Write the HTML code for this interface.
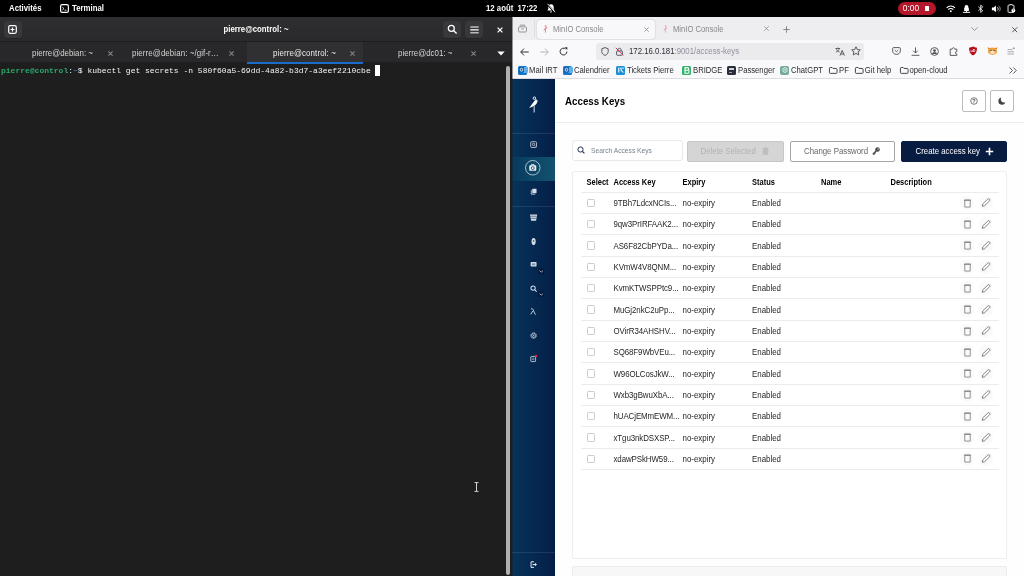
<!DOCTYPE html>
<html><head><meta charset="utf-8"><title>MinIO Console</title>
<style>
*{box-sizing:border-box;margin:0;padding:0}
#top,#term,#br{will-change:transform}
html,body{width:1024px;height:576px;overflow:hidden;background:#000;font-family:"Liberation Sans","DejaVu Sans",sans-serif}
svg{position:absolute;overflow:visible}
#top{position:absolute;left:0;top:0;width:1024px;height:17px;background:#000;color:#fff;font-family:"Liberation Sans","DejaVu Sans",sans-serif;font-weight:bold;font-size:7.8px;line-height:17.5px}
#top span{position:absolute;top:0;white-space:nowrap;transform:scaleY(1.1);transform-origin:50% 58%}
#rec{position:absolute;left:898px;top:2px;width:38px;height:13px;border-radius:7px;background:#b4162a}
/* terminal */
#term{position:absolute;left:0;top:17px;width:512px;height:559px;background:#1e1e1e;overflow:hidden}
#thead{position:absolute;left:0;top:0;width:512px;height:25.3px;background:linear-gradient(#2e2d2f,#2a292b);border-bottom:1.5px solid #1d1c1e}
.hb{position:absolute;top:4px;height:17px;width:17.5px;background:#383739;border-radius:3px;box-shadow:0 .8px 0 #222123}
#ttitle{position:absolute;left:0;width:512px;top:0;text-align:center;color:#fff;font-family:"Liberation Sans","DejaVu Sans",sans-serif;font-weight:bold;font-size:7.8px;line-height:25px;transform:scaleY(1.1);transform-origin:50% 56%}
#ttabs{position:absolute;left:0;top:25px;width:512px;height:21px;background:#282729;border-bottom:1px solid #1f1e20}
#tact{position:absolute;left:247px;top:0;width:116px;height:21.8px;background:#302f31;border-bottom:2px solid #1c6ccc}
.tt{position:absolute;top:0;height:21px;color:#d4d4d4;font-family:"Liberation Sans","DejaVu Sans",sans-serif;font-size:7.9px;line-height:23px;white-space:nowrap;transform:scaleY(1.1);transform-origin:50% 56%}
#tline{position:absolute;left:1px;top:46.8px;white-space:pre;font-family:"Liberation Mono","DejaVu Sans Mono",monospace;font-size:8px;line-height:14px;color:#f4f4f4}
#tcur{position:absolute;left:375px;top:47.5px;width:5px;height:11px;background:#fff}
#tscroll{position:absolute;left:506.3px;top:48.5px;width:4px;height:509px;border-radius:2px;background:#b0b0b0}
/* browser */
#br{position:absolute;left:512px;top:17px;width:512px;height:559px;background:#f9f9fb;overflow:hidden}
#bedge{position:absolute;left:0;top:0;width:1px;height:559px;background:rgba(28,28,30,.45);z-index:9}
#btabs{position:absolute;left:0;top:0;width:512px;height:23px;background:#eeeef1}
#btab1{position:absolute;left:25px;top:2.5px;width:118px;height:19px;background:#f8f8fa;border-radius:3px;box-shadow:0 0 1.5px rgba(0,0,0,.28)}
.bt{position:absolute;top:0;font-size:7.65px;color:#88888c;line-height:25px;white-space:nowrap;transform:scaleY(1.12);transform-origin:50% 56%}
#btool{position:absolute;left:0;top:23px;width:512px;height:22px;background:#f9f9fb}
#url{position:absolute;left:83.5px;top:2.8px;width:268.5px;height:17px;border-radius:3px;background:#ebebee;font-size:7.8px;line-height:18.4px;color:#8f8f9d;white-space:nowrap}
#bbm{position:absolute;left:0;top:45px;width:512px;height:17px;background:#f9f9fb;border-bottom:1px solid #dcdce0;font-size:7.7px;color:#2c2c31;line-height:16.5px}
#bbm span{position:absolute;top:.7px;white-space:nowrap;transform:scaleY(1.12);transform-origin:50% 56%}
.ic{position:absolute;top:3.5px;width:9px;height:9px;border-radius:1.5px}
/* page */
#page{position:absolute;left:0;top:62px;width:512px;height:497px;background:#fefefe;overflow:hidden}
#pin{position:absolute;left:1px;top:0;width:511px;height:497px}
#side{position:absolute;left:-1px;top:0;width:43px;height:497px;background:linear-gradient(90deg,#07345a 0%,#062b52 35%,#05234c 80%,#041d47 100%)}
.sep{position:absolute;left:0;width:43px;height:1px;background:rgba(255,255,255,.10)}
#sel{position:absolute;left:0;top:77.5px;width:43px;height:24px;background:linear-gradient(90deg,#083a5e 0%,#0d4868 55%,#12526f 100%)}
#phead{position:absolute;left:42px;top:0;width:469px;height:43.6px;background:#fff;border-bottom:1px solid #eeeeee}
#phead h1{transform:scaleY(1.08);transform-origin:50% 56%;position:absolute;left:10px;top:15.6px;font-size:9.75px;font-weight:bold;color:#000;line-height:14px}
.sq{position:absolute;top:11.3px;width:24px;height:21.7px;border:1px solid #bdbdbd;border-radius:2px;background:#fff}
.btn{position:absolute;top:61.5px;height:21px;border-radius:2px;font-size:7.85px;line-height:21px;white-space:nowrap}
.btn span{position:absolute;top:0;transform:scaleY(1.12);transform-origin:50% 56%}
#tbl{position:absolute;left:59px;top:92px;width:435px;height:387.5px;padding-top:0;background:#fff;border:1px solid #eeeeee;border-radius:2px}
#nxt{position:absolute;left:59px;top:487px;width:435px;height:30px;background:#f7f7f7;border:1px solid #ececec;border-radius:2px}
.row{position:absolute;left:7.5px;width:418px;height:21.33px;border-bottom:1px solid #ebebeb;font-size:7.9px;color:#262626;line-height:21px}
.row span{position:absolute;top:.2px;white-space:nowrap;transform:scaleY(1.13);transform-origin:50% 55%}
.hd{font-weight:bold;color:#000;font-size:7.5px}
.cb{position:absolute;left:6px;top:6px;width:8.6px;height:8.4px;border:1px solid #cdcdcd;border-radius:1.2px;background:#fff}
.ci{position:absolute;top:3.2px;width:14px;height:14px;border-radius:7px;background:#fafafa}
</style></head><body>
<div id="top">
<span style="left:9px">Activités</span>
<svg style="left:60px;top:3.5px" width="9" height="9" viewBox="0 0 9 9" ><rect x=".6" y=".6" width="7.8" height="7.8" rx="1.6" fill="none" stroke="#fff" stroke-width="1.2"/><path d="M2.4 3.2 L4 4.6 L2.4 6" fill="none" stroke="#fff" stroke-width=".9"/><path d="M4.6 6.2H6.4" stroke="#fff" stroke-width=".9"/></svg>
<span style="left:72px">Terminal</span>
<span style="left:486px">12 août</span><span style="left:517.5px">17:22</span>
<svg style="left:546px;top:3px" width="10" height="11" viewBox="0 0 10 11" ><path d="M5 1.2c-1.7 0-2.7 1.2-2.7 2.9v2l-1 1.5h7.4l-1-1.5v-2c0-1.7-1-2.9-2.7-2.9z" fill="#fff"/><path d="M4 8.4h2c0 .7-.4 1.1-1 1.1s-1-.4-1-1.1z" fill="#fff"/><path d="M1.2 1 L8.8 9.6" stroke="#000" stroke-width="1.6"/><path d="M1.6 .8 L9 9.2" stroke="#fff" stroke-width=".9"/></svg>
<div id="rec"></div>
<span style="left:902.800px;font-size:8.400px;font-weight:normal">0:00</span>
<div style="position:absolute;left:925px;top:6.2px;width:4.4px;height:4.4px;background:#fff;border-radius:.5px"></div>
<svg style="left:946.3px;top:4.6px" width="9.6" height="8" viewBox="0 0 12 10" ><path d="M.8 3.6C2.1 2.2 3.9 1.3 6 1.3s3.9.9 5.2 2.3" fill="none" stroke="#fff" stroke-width="1.3"/><path d="M2.8 5.7C3.6 4.8 4.7 4.3 6 4.3s2.4.5 3.2 1.4" fill="none" stroke="#fff" stroke-width="1.3"/><circle cx="6" cy="7.9" r="1.2" fill="#fff"/></svg>
<svg style="left:961.7px;top:3.8px" width="9" height="9.9" viewBox="0 0 10 11" ><path d="M3 4.2V3c0-1.1.9-1.9 2-1.9S7 1.900 7 3v1.200h.6v3.600H2.400V4.200z" fill="#fff"/><path d="M1 9.300h8" stroke="#fff" stroke-width="1.100"/><path d="M5 7.800v1.500" stroke="#fff" stroke-width="1"/></svg>
<svg style="left:977.3px;top:3.5px" width="7.4" height="9.8" viewBox="0 0 9 12" ><path d="M1.600 3.500L7 8.200 4.500 10.400V1.400L7 3.600 1.600 8.300" fill="none" stroke="#fff" stroke-width="1"/></svg>
<svg style="left:990.5px;top:3.6px" width="11.5" height="9.7" viewBox="0 0 13 11" ><path d="M1 4h2L5.600 1.600v7.800L3 7H1z" fill="#fff"/><path d="M7 3.600c.8.500 1.100 1.100 1.100 1.900S7.800 6.900 7 7.400" fill="none" stroke="#fff" stroke-width="1"/><path d="M8.600 2.200c1.200.8 1.800 1.900 1.800 3.300s-.6 2.500-1.800 3.300" fill="none" stroke="#bbb" stroke-width=".9"/></svg>
<svg style="left:1006.6px;top:3.8px" width="8.8" height="9.6" viewBox="0 0 11 12" ><path d="M3.500 1.500V.8h3v.7H8c.4 0 .7.300.7.700v7.600c0 .4-.3.700-.7.700H2c-.4 0-.7-.3-.7-.7V2.200c0-.4.300-.7.700-.7z" fill="none" stroke="#fff" stroke-width="1.100"/><circle cx="8" cy="8" r="2.400" fill="#fff"/><path d="M7 7.300c.3-.8 1.700-.7 1.600.2 0 .5-.7.600-.7 1.100" fill="none" stroke="#000" stroke-width=".6"/></svg>
</div>
<div id="term">
 <div id="thead">
  <div class="hb" style="left:4px"></div>
  <svg style="left:8.2px;top:7.8px" width="9" height="9" viewBox="0 0 9 9" ><rect x=".7" y=".7" width="7.600" height="7.600" rx="1.500" fill="none" stroke="#fff" stroke-width="1.200"/><path d="M4.500 2.500v4M2.500 4.500h4" stroke="#fff" stroke-width="1.200"/></svg>
  <div id="ttitle">pierre@control: ~</div>
  <div class="hb" style="left:443px"></div>
  <svg style="left:446.5px;top:7px" width="11" height="11" viewBox="0 0 11 11" ><circle cx="4.300" cy="4.300" r="3" fill="none" stroke="#fff" stroke-width="1.300"/><path d="M6.500 6.500L9.600 9.600" stroke="#fff" stroke-width="1.400"/></svg>
  <div class="hb" style="left:465px"></div>
  <svg style="left:469.5px;top:8.5px" width="9" height="8" viewBox="0 0 9 8" ><path d="M.3 1h8.400M.3 3.900h8.400" stroke="#fff" stroke-width="1.200"/><path d="M.3 6.800h8.400" stroke="#ddd" stroke-width="1.200"/></svg>
  <svg style="left:497px;top:9.5px" width="6" height="6" viewBox="0 0 6 6" ><path d="M.6 .6L5.400 5.400M5.400 .6L.6 5.400" stroke="#fff" stroke-width="1.300"/></svg>
 </div>
 <div id="ttabs">
  <div id="tact"></div>
  <span class="tt" style="left:32px;letter-spacing:0px;color:#d4d4d4">pierre@debian: ~</span><svg style="left:108.0px;top:8.8px" width="5" height="5" viewBox="0 0 5 5" ><path d="M.4 .4L4.600 4.600M4.600 .4L.4 4.600" stroke="#858585" stroke-width="1.050"/></svg>
  <span class="tt" style="left:132px;letter-spacing:0.1px;color:#d4d4d4">pierre@debian: ~/gif-r…</span><svg style="left:228.5px;top:8.8px" width="5" height="5" viewBox="0 0 5 5" ><path d="M.4 .4L4.600 4.600M4.600 .4L.4 4.600" stroke="#858585" stroke-width="1.050"/></svg>
  <span class="tt" style="left:273px;letter-spacing:0.12px;color:#ececec">pierre@control: ~</span><svg style="left:349.5px;top:8.8px" width="5" height="5" viewBox="0 0 5 5" ><path d="M.4 .4L4.600 4.600M4.600 .4L.4 4.600" stroke="#858585" stroke-width="1.050"/></svg>
  <span class="tt" style="left:398px;letter-spacing:0px;color:#d4d4d4">pierre@dc01: ~</span><svg style="left:470.5px;top:8.8px" width="5" height="5" viewBox="0 0 5 5" ><path d="M.4 .4L4.600 4.600M4.600 .4L.4 4.600" stroke="#858585" stroke-width="1.050"/></svg>
  <svg style="left:496.5px;top:9px" width="8" height="5" viewBox="0 0 8 5" ><path d="M.3 .5h7.400L4 4.500z" fill="#fff"/></svg>
 </div>
 <div id="tline"><b style="color:#2aa86a">pierre@control</b>:<b style="color:#2a6db5">~</b>$ kubectl get secrets -n 580f60a5-69dd-4a82-b3d7-a3eef2210cbe</div>
 <div id="tcur"></div>
 <div id="tscroll"></div>
 <svg style="left:474px;top:465px" width="5" height="10" viewBox="0 0 5 10" ><path d="M.5 .6h4M.5 9.400h4M2.500 .6v8.800" stroke="#d0d0d0" stroke-width="1"/></svg>
</div>
<div id="br"><div id="bedge"></div>
 <div id="btabs">
  <svg style="left:6.3px;top:7.3px" width="9" height="9" viewBox="0 0 10 9" ><rect x=".6" y="2.600" width="8.800" height="5.800" rx="1.200" fill="none" stroke="#8a8a92" stroke-width="1"/><path d="M2 .8h6" stroke="#8a8a92" stroke-width="1"/><path d="M3.600 5h2.800" stroke="#8a8a92" stroke-width="1"/></svg>
  <div style="position:absolute;left:22px;top:3px;width:1px;height:17px;background:#dcdce2"></div>
  <div id="btab1"></div>
  <svg style="left:30.9px;top:7.7px" width="4.3" height="8.1" viewBox="0 0 9 17" ><circle cx="5.300" cy="2.300" r="1.300" fill="none" stroke="#e0566a" stroke-width="1.100"/><path d="M6.300 2.900C7.600 3.800 8 4.800 7.600 6" fill="none" stroke="#e0566a" stroke-width="1.100"/><path d="M7.900 5.200C7.800 8 5 9.800 .5 11.500 2.600 9 4.600 6.800 6.600 4.900z" fill="#e0566a"/><path d="M5.100 9.800V16.300" stroke="#e0566a" stroke-width="1.400"/></svg>
  <span class="bt" style="left:41px">MinIO Console</span>
  <svg style="left:131.5px;top:9.5px" width="5" height="5" viewBox="0 0 5 5" ><path d="M.3 .3L4.700 4.700M4.700 .3L.3 4.700" stroke="#8a8a92" stroke-width=".8"/></svg>
  <div style="opacity:.6"><svg style="left:151.4px;top:7.7px" width="4.3" height="8.1" viewBox="0 0 9 17" ><circle cx="5.300" cy="2.300" r="1.300" fill="none" stroke="#e0566a" stroke-width="1.100"/><path d="M6.300 2.900C7.600 3.800 8 4.800 7.600 6" fill="none" stroke="#e0566a" stroke-width="1.100"/><path d="M7.900 5.200C7.800 8 5 9.800 .5 11.500 2.600 9 4.600 6.800 6.600 4.900z" fill="#e0566a"/><path d="M5.100 9.800V16.300" stroke="#e0566a" stroke-width="1.400"/></svg></div>
  <span class="bt" style="left:161px">MinIO Console</span>
  <svg style="left:251.8px;top:9.2px" width="5" height="5" viewBox="0 0 5 5" ><path d="M.3 .3L4.700 4.700M4.700 .3L.3 4.700" stroke="#8a8a92" stroke-width=".8"/></svg>
  <svg style="left:270.5px;top:8.5px" width="7" height="7" viewBox="0 0 7 7" ><path d="M3.500 .3v6.400M.3 3.500h6.400" stroke="#7a7a82" stroke-width=".9"/></svg>
  <svg style="left:458.5px;top:10px" width="7" height="4" viewBox="0 0 7 4" ><path d="M.4 .4L3.500 3.400 6.600 .4" fill="none" stroke="#8a8a92" stroke-width=".9"/></svg>
  <svg style="left:500px;top:9.5px" width="5.5" height="5.5" viewBox="0 0 5 5" ><path d="M.3 .3L4.700 4.700M4.700 .3L.3 4.700" stroke="#55555c" stroke-width=".9"/></svg>
 </div>
 <div id="btool">
  <svg style="left:8px;top:7.5px" width="9" height="8" viewBox="0 0 9 8" ><path d="M4 .6L.7 4 4 7.400M.9 4h7.800" fill="none" stroke="#2b2b33" stroke-width="1"/></svg>
  <svg style="left:27.5px;top:7.5px" width="9" height="8" viewBox="0 0 9 8" ><path d="M5 .6L8.300 4 5 7.400M8.100 4H.3" fill="none" stroke="#b4b4bb" stroke-width="1"/></svg>
  <svg style="left:46.5px;top:6.5px" width="9" height="9" viewBox="0 0 9 9" ><path d="M7.900 4.600A3.400 3.400 0 1 1 6.600 1.900" fill="none" stroke="#2b2b33" stroke-width="1"/><path d="M5.600 .2h2.700v2.700z" fill="#2b2b33"/></svg>
  <div id="url">
   <svg style="left:5px;top:4px" width="8" height="9" viewBox="0 0 8 9" ><path d="M4 .6L.8 1.800v2.600c0 2 1.300 3.300 3.200 4 1.900-.7 3.200-2 3.200-4V1.800z" fill="none" stroke="#4a4a52" stroke-width=".9"/></svg>
   <svg style="left:19.5px;top:4px" width="9" height="9" viewBox="0 0 9 9" ><rect x="1.600" y="4" width="5.800" height="4.300" rx=".8" fill="none" stroke="#4a4a52" stroke-width=".9"/><path d="M2.900 4V2.900c0-1 .7-1.700 1.600-1.700s1.600.7 1.600 1.700V4" fill="none" stroke="#4a4a52" stroke-width=".9"/><path d="M.8 .8L8.200 8.400" stroke="#e22850" stroke-width=".9"/></svg>
   <span style="position:absolute;left:33.500px;top:0;transform:scaleY(1.12);transform-origin:50% 56%"><span style="color:#2e2e36">172.16.0.181</span>:9001/access-keys</span>
   <svg style="left:239.5px;top:4px" width="10" height="9" viewBox="0 0 10 9" ><path d="M.5 1.500h4.600M2.800 .5v1M1.300 1.500c.3 1.700 1.500 3 3.400 3.600M4.300 1.500C4 3.200 2.800 4.500 .9 5.100" fill="none" stroke="#4a4a52" stroke-width=".8"/><path d="M5 8.600L7.200 3.400 9.400 8.600M5.800 7h2.800" fill="none" stroke="#4a4a52" stroke-width=".9"/></svg>
   <svg style="left:255px;top:3.5px" width="10" height="10" viewBox="0 0 10 10" ><path d="M5 .8l1.300 2.800 3 .3-2.200 2 .6 3L5 7.400 2.300 8.900l.6-3-2.200-2 3-.3z" fill="none" stroke="#4a4a52" stroke-width=".9" stroke-linejoin="round"/></svg>
  </div>
  <svg style="left:379.5px;top:7px" width="9" height="8" viewBox="0 0 9 8" ><path d="M1.600 .6h5.800c.6 0 1 .4 1 1v2.200c0 2.100-1.700 3.600-3.900 3.600S.6 5.900.6 3.800V1.600c0-.6.400-1 1-1z" fill="none" stroke="#4a4a52" stroke-width=".9"/><path d="M2.700 3l1.800 1.700L6.300 3" fill="none" stroke="#4a4a52" stroke-width=".9"/></svg>
  <svg style="left:398.5px;top:6.5px" width="9" height="9" viewBox="0 0 9 9" ><path d="M4.500 .4v5.400M2.200 3.700l2.300 2.300 2.300-2.300M.6 8.300h7.800" fill="none" stroke="#4a4a52" stroke-width=".9"/></svg>
  <svg style="left:417.5px;top:6.5px" width="9" height="9" viewBox="0 0 9 9" ><circle cx="4.500" cy="4.500" r="3.900" fill="none" stroke="#4a4a52" stroke-width=".9"/><circle cx="4.500" cy="3.600" r="1.300" fill="#4a4a52"/><path d="M2 6.900c.5-1.200 1.400-1.600 2.500-1.600s2 .4 2.500 1.600" fill="#4a4a52"/></svg>
  <svg style="left:437px;top:6.5px" width="9" height="9" viewBox="0 0 9 9" ><path d="M3.200 2.200c0-1 .6-1.500 1.300-1.500s1.300.5 1.300 1.500h2v2.400M7.800 8.400H1.200V2.200h2" fill="none" stroke="#4a4a52" stroke-width=".9"/><path d="M7.800 4.600c-.9 0-1.400.5-1.400 1.200S6.900 7 7.800 7v1.400" fill="none" stroke="#4a4a52" stroke-width=".9"/></svg>
  <svg style="left:455.5px;top:6px" width="10" height="10" viewBox="0 0 10 10" ><path d="M5 .5c1.400.8 2.600 1.100 4 1.200 0 3.600-1 6.300-4 7.800C2 8 1 5.300 1 1.700 2.400 1.600 3.600 1.300 5 .5z" fill="#b5121b"/><text x="5" y="6.300" font-size="3.600" font-family="Liberation Sans,sans-serif" font-weight="bold" fill="#fff" text-anchor="middle">uD</text></svg>
  <svg style="left:475px;top:6px" width="11" height="10" viewBox="0 0 11 10" ><ellipse cx="5.500" cy="5.200" rx="4.600" ry="3.700" fill="#f0a23a"/><path d="M1.500 3.500L.5 1.200 3.400 2.200zM9.500 3.500l1-2.300-2.900 1z" fill="#e07a22"/><ellipse cx="5.500" cy="6.300" rx="2.400" ry="1.700" fill="#f7e3c0"/><circle cx="3.900" cy="4.400" r=".7" fill="#3b4a7a"/><circle cx="7.100" cy="4.400" r=".7" fill="#3b4a7a"/></svg>
  <svg style="left:494.5px;top:6px" width="10" height="10" viewBox="0 0 10 10" ><path d="M.5 3.600h5M.5 5.800h6.500M.5 8h6.500" stroke="#a2a2a8" stroke-width=".9"/><path d="M6.800 .8l1.400 2.200H5.400z" fill="#a2a2a8"/></svg>
 </div><div id="bbm">
  <div class="ic" style="left:6px;background:#1677c9"></div><div style="position:absolute;left:11px;top:5px;width:5px;height:6px;background:#5fb0ea;border-radius:1px"></div><svg style="left:6.8px;top:5.3px" width="5" height="5.5" viewBox="0 0 5 5.500" ><rect width="5" height="5.500" rx=".8" fill="#0f5ea8"/><ellipse cx="2.500" cy="2.750" rx="1.300" ry="1.500" fill="none" stroke="#fff" stroke-width=".8"/></svg><span style="left:17px">Mail IRT</span>
  <div class="ic" style="left:51px;background:#1677c9"></div><div style="position:absolute;left:56px;top:5px;width:5px;height:6px;background:#5fb0ea;border-radius:1px"></div><svg style="left:51.8px;top:5.3px" width="5" height="5.5" viewBox="0 0 5 5.500" ><rect width="5" height="5.500" rx=".8" fill="#0f5ea8"/><ellipse cx="2.500" cy="2.750" rx="1.300" ry="1.500" fill="none" stroke="#fff" stroke-width=".8"/></svg><span style="left:62px">Calendrier</span>
  <div class="ic" style="left:104px;background:#1d8fd6"></div><svg style="left:105.5px;top:5px" width="6" height="6" viewBox="0 0 6 6" ><path d="M.8 .5v5M3 .5v2.500l2.300 2.500M5 .5v1.500" fill="none" stroke="#fff" stroke-width="1.100"/></svg><span style="left:115px">Tickets Pierre</span>
  <div class="ic" style="left:170px;background:#2fb56a"></div><svg style="left:171.5px;top:4.5px" width="6" height="7" viewBox="0 0 6 7" ><path d="M1 .6h2.500c1.500 0 1.500 2.700 0 2.700H1h2.900c1.600 0 1.600 3 0 3H1z" fill="none" stroke="#fff" stroke-width="1.100"/></svg><span style="left:181px">BRIDGE</span>
  <div class="ic" style="left:215px;background:#2c2f3a"></div><div style="position:absolute;left:217px;top:5.500px;width:5px;height:2.500px;background:#cfd3dc"></div><div style="position:absolute;left:217px;top:9.500px;width:3px;height:1px;background:#9aa0ad"></div><span style="left:226px">Passenger</span>
  <div class="ic" style="left:268px;background:#74aa9c;border-radius:2px"></div><svg style="left:269.5px;top:5px" width="6" height="6" viewBox="0 0 6 6" ><circle cx="3" cy="3" r="2.300" fill="none" stroke="#fff" stroke-width=".8"/><circle cx="3" cy="3" r=".8" fill="#fff"/></svg><span style="left:279px">ChatGPT</span>
  <svg style="left:316.5px;top:4.5px" width="8.5" height="6.8" viewBox="0 0 10 8" ><path d="M.5 1.500c0-.5.4-.9.900-.9h2.300l1 1.100h3.900c.5 0 .9.400.9.900v4c0 .5-.4.900-.9.900H1.400c-.5 0-.9-.4-.9-.9z" fill="none" stroke="#3a3a42" stroke-width="1.100"/></svg><span style="left:327px">PF</span>
  <svg style="left:343px;top:4.5px" width="8.5" height="6.8" viewBox="0 0 10 8" ><path d="M.5 1.500c0-.5.4-.9.900-.9h2.300l1 1.100h3.900c.5 0 .9.400.9.900v4c0 .5-.4.900-.9.900H1.400c-.5 0-.9-.4-.9-.9z" fill="none" stroke="#3a3a42" stroke-width="1.100"/></svg><span style="left:352.800px">Git help</span>
  <svg style="left:387.5px;top:4.5px" width="8.5" height="6.8" viewBox="0 0 10 8" ><path d="M.5 1.500c0-.5.4-.9.900-.9h2.300l1 1.100h3.900c.5 0 .9.400.9.900v4c0 .5-.4.900-.9.900H1.400c-.5 0-.9-.4-.9-.9z" fill="none" stroke="#3a3a42" stroke-width="1.100"/></svg><span style="left:397.500px">open-cloud</span>
  <svg style="left:497px;top:5px" width="8" height="7" viewBox="0 0 8 7" ><path d="M.5 .5L3.500 3.500.5 6.500M4.300 .5L7.300 3.500 4.300 6.500" fill="none" stroke="#45454d" stroke-width=".9"/></svg>
 </div>
<div id="page"><div id="pin">
  <div id="side">
   <div id="sel"></div>
   <div class="sep" style="top:54px"></div><div class="sep" style="top:127px"></div><div class="sep" style="top:473px"></div>
   <svg style="left:16.7px;top:17.0px" width="9" height="17" viewBox="0 0 9 17" ><circle cx="5.400" cy="2.200" r="1.250" fill="none" stroke="#fff" stroke-width=".9"/><path d="M6.400 2.900C7.800 3.700 8.300 4.800 7.800 6" fill="none" stroke="#fff" stroke-width=".9"/><path d="M8.300 4.600C8.600 8.200 5.600 10.300 .2 11.900 2.400 9 4.300 6.300 6.300 4.100z" fill="#fff"/><path d="M5.200 9.800V16.400" stroke="#a8b8d4" stroke-width="1.300"/></svg><svg style="left:17.599999999999998px;top:61.9px" width="7.2" height="7.2" viewBox="0 0 9 9" ><rect x=".9" y=".9" width="7.200" height="7.200" rx="1" fill="none" stroke="#d3dbe7" stroke-width="1"/><circle cx="4.500" cy="4.300" r="1.500" fill="none" stroke="#d3dbe7" stroke-width=".9"/><path d="M5.500 5.500l1.400 1.400" stroke="#d3dbe7" stroke-width=".9"/></svg><svg style="left:13.44px;top:81.04px" width="15.52" height="15.52" viewBox="0 0 16 16" ><circle cx="8" cy="8" r="7.500" fill="none" stroke="#d5dde8" stroke-width=".8"/><rect x="4.400" y="5.500" width="7.200" height="5.600" rx=".9" fill="#e9edf3"/><path d="M6.700 5.500V4.600h2.600v.9" fill="none" stroke="#e9edf3" stroke-width=".9"/><circle cx="8" cy="8.400" r="1.500" fill="none" stroke="#0d3f5f" stroke-width=".8"/></svg><svg style="left:17.599999999999998px;top:108.9px" width="7.2" height="7.2" viewBox="0 0 9 9" ><rect x="2.800" y=".8" width="5.400" height="5.800" rx=".6" fill="#d3dbe7"/><path d="M1.600 2.400v5.400h4.800" fill="none" stroke="#d3dbe7" stroke-width="1"/></svg><svg style="left:17.599999999999998px;top:135.4px" width="7.2" height="7.2" viewBox="0 0 9 9" ><path d="M0 .6h9L7.600 8.600H1.400z" fill="#d3dbe7"/><path d="M.6 2.800h7.800M1 5.400h7" stroke="#0a2b4f" stroke-width=".7"/></svg><svg style="left:17.599999999999998px;top:158.9px" width="7.2" height="7.2" viewBox="0 0 9 9" ><path d="M4.500 0c1.900 0 2.600 1.800 2.600 4.500S6.400 9 4.500 9 1.900 7.200 1.900 4.500 2.600 0 4.500 0z" fill="#d3dbe7"/><circle cx="4.500" cy="3.600" r=".9" fill="#0a2b4f"/></svg><svg style="left:17.599999999999998px;top:182.4px" width="7.2" height="7.2" viewBox="0 0 9 9" ><rect x=".8" y="1.300" width="7.400" height="5.600" rx=".8" fill="#d3dbe7"/><path d="M3 3v2.400M4.500 3v2.400M6 3v2.400" stroke="#0a2b4f" stroke-width=".6"/></svg><svg style="left:17.599999999999998px;top:205.9px" width="7.2" height="7.2" viewBox="0 0 9 9" ><circle cx="3.900" cy="3.900" r="2.700" fill="none" stroke="#d3dbe7" stroke-width="1.300"/><path d="M5.900 5.900L8.300 8.300" stroke="#d3dbe7" stroke-width="1.400"/></svg><svg style="left:17.599999999999998px;top:229.4px" width="7.2" height="7.2" viewBox="0 0 9 9" ><path d="M1.200 1h1.500c.6 0 .9.300 1.200 1l2.200 5.400c.2.500.5.600 1.200.5M3.500 3.600L1 8" fill="none" stroke="#d3dbe7" stroke-width="1.100"/></svg><svg style="left:17.599999999999998px;top:252.9px" width="7.2" height="7.2" viewBox="0 0 9 9" ><circle cx="4.500" cy="4.500" r="3.400" fill="none" stroke="#d3dbe7" stroke-width="1.200" stroke-dasharray="1.600 .7"/><circle cx="4.500" cy="4.500" r="2.300" fill="none" stroke="#d3dbe7" stroke-width=".9"/><circle cx="4.500" cy="4.500" r=".8" fill="#d3dbe7"/></svg><svg style="left:17.599999999999998px;top:276.4px" width="7.2" height="7.2" viewBox="0 0 9 9" ><rect x="1" y="1.800" width="6" height="6.400" rx=".7" fill="none" stroke="#d3dbe7" stroke-width="1"/><path d="M2.600 4h2.800M2.600 5.800h2.800" stroke="#d3dbe7" stroke-width=".7"/><circle cx="7.600" cy="1.300" r="1.500" fill="#e0263c"/></svg><svg style="left:17.599999999999998px;top:482.19999999999993px" width="7.2" height="7.2" viewBox="0 0 9 9" ><path d="M5 1H1.300v7H5" fill="none" stroke="#e6ebf2" stroke-width="1.250"/><path d="M3.200 4.500h3.600" fill="none" stroke="#e6ebf2" stroke-width="1.300"/><path d="M6.200 2.300L8.700 4.500 6.200 6.700z" fill="#e6ebf2"/></svg><div style="position:absolute;left:26.300px;top:188.8px;width:6px;height:6px;border-radius:1.500px;background:#051a3d"></div><div style="position:absolute;left:26.300px;top:212.3px;width:6px;height:6px;border-radius:1.500px;background:#051a3d"></div><svg style="left:27px;top:190.5px" width="4.5" height="2.7" viewBox="0 0 5 3" ><path d="M.5 .6L2.500 2.400 4.500 .6" fill="none" stroke="#d3dbe7" stroke-width=".8"/></svg><svg style="left:27px;top:214.0px" width="4.5" height="2.7" viewBox="0 0 5 3" ><path d="M.5 .6L2.500 2.400 4.500 .6" fill="none" stroke="#d3dbe7" stroke-width=".8"/></svg>
  </div>
  <div id="phead"><h1>Access Keys</h1>
   <div class="sq" style="left:407px"></div><svg style="left:414.8px;top:17.8px" width="8" height="8" viewBox="0 0 8 8" ><circle cx="4" cy="4" r="3.300" fill="none" stroke="#444" stroke-width=".7"/><text x="4" y="6" font-size="5.500" font-family="Liberation Sans,sans-serif" font-weight="bold" fill="#444" text-anchor="middle">?</text></svg>
   <div class="sq" style="left:434.500px"></div><svg style="left:442.5px;top:17.8px" width="8" height="8" viewBox="0 0 8 8" ><path d="M3.300 .6A3.600 3.600 0 1 0 7.400 5.200 3.200 3.200 0 0 1 3.300 .6z" fill="#444"/></svg>
  </div>
  <div class="btn" style="left:59px;top:61px;height:21px;width:110.5px;background:#fff;border:1px solid #e9e9e9;border-radius:3px">
   <svg style="left:4px;top:4.8px" width="8" height="8" viewBox="0 0 8 8" ><circle cx="3.500" cy="3.500" r="2.600" fill="none" stroke="#1c2f4f" stroke-width="1"/><path d="M5.400 5.400L7.400 7.400" stroke="#1c2f4f" stroke-width="1.100"/></svg>
   <span style="left:18px;color:#78828e;font-size:6.700px;top:-1.400px">Search Access Keys</span>
  </div>
  <div class="btn" style="left:174px;width:97px;background:#d5d5d5;border:1px solid #c6c6c6;color:#b2b2b2"><span style="left:12.500px;top:-1px">Delete Selected</span>
   <svg style="left:74.3px;top:5.5px" width="7" height="8" viewBox="0 0 7 8" ><path d="M.5 1.500h6M1.200 1.500V7.500h4.600V1.500z" fill="#bdbdbd" stroke="#bdbdbd" stroke-width=".7"/><path d="M2.300 .6h2.400" stroke="#bdbdbd" stroke-width=".8"/></svg>
  </div>
  <div class="btn" style="left:277px;width:105px;background:#fff;border:1px solid #a4a4a4;color:#666"><span style="left:13px;top:-1px">Change Password</span>
   <svg style="left:81px;top:5.5px" width="8" height="8" viewBox="0 0 8 8" ><circle cx="5.500" cy="2.500" r="2.300" fill="#4a4a4a"/><circle cx="6.100" cy="1.900" r=".6" fill="#fff"/><path d="M4.300 3.700L.8 7.200M1.500 6.400l1.100 1.100M2.800 5.200l1 1" stroke="#4a4a4a" stroke-width="1.400"/></svg>
  </div>
  <div class="btn" style="left:388px;width:106px;background:#081c42;border:1px solid #081c42;color:#fff"><span style="left:13.500px;top:-1px">Create access key</span>
   <svg style="left:84px;top:6px" width="7" height="7" viewBox="0 0 7 7" ><path d="M3.500 -.2v7.400M-.2 3.500h7.400" stroke="#fff" stroke-width="1.600"/></svg>
  </div>
  <div id="tbl"><div class="row hd" style="top:-0.6px"><span style="left:6px">Select</span><span style="left:33px">Access Key</span><span style="left:102px">Expiry</span><span style="left:171.5px">Status</span><span style="left:240.5px">Name</span><span style="left:310px">Description</span></div><div class="row" style="top:20.73px"><div class="cb"></div><span style="left:33px;letter-spacing:-.08px">9TBh7LdcxNCIs...</span><span style="left:102px">no-expiry</span><span style="left:171.5px">Enabled</span><div class="ci" style="left:379px"></div><svg style="left:382px;top:5.8px" width="9" height="9" viewBox="0 0 8 8" ><path d="M1 1.300h6M1.600 1.300V7.200h4.800V1.300" fill="none" stroke="#626262" stroke-width=".6"/><path d="M1.300 .6h5.400" stroke="#626262" stroke-width=".45"/></svg><div class="ci" style="left:398.5px"></div><svg style="left:400.8px;top:5.5px" width="9.5" height="9.5" viewBox="0 0 8 8" ><path d="M1 7l.5-2L5.700 .9c.5-.5 1.100-.4 1.500 0s.5 1 0 1.500L3 6.500z" fill="none" stroke="#555" stroke-width=".6" stroke-linejoin="round"/></svg></div><div class="row" style="top:42.06px"><div class="cb"></div><span style="left:33px;letter-spacing:-.08px">9qw3PrIRFAAK2...</span><span style="left:102px">no-expiry</span><span style="left:171.5px">Enabled</span><div class="ci" style="left:379px"></div><svg style="left:382px;top:5.8px" width="9" height="9" viewBox="0 0 8 8" ><path d="M1 1.300h6M1.600 1.300V7.200h4.800V1.300" fill="none" stroke="#626262" stroke-width=".6"/><path d="M1.300 .6h5.400" stroke="#626262" stroke-width=".45"/></svg><div class="ci" style="left:398.5px"></div><svg style="left:400.8px;top:5.5px" width="9.5" height="9.5" viewBox="0 0 8 8" ><path d="M1 7l.5-2L5.700 .9c.5-.5 1.100-.4 1.500 0s.5 1 0 1.500L3 6.500z" fill="none" stroke="#555" stroke-width=".6" stroke-linejoin="round"/></svg></div><div class="row" style="top:63.39px"><div class="cb"></div><span style="left:33px;letter-spacing:-.08px">AS6F82CbPYDa...</span><span style="left:102px">no-expiry</span><span style="left:171.5px">Enabled</span><div class="ci" style="left:379px"></div><svg style="left:382px;top:5.8px" width="9" height="9" viewBox="0 0 8 8" ><path d="M1 1.300h6M1.600 1.300V7.200h4.800V1.300" fill="none" stroke="#626262" stroke-width=".6"/><path d="M1.300 .6h5.400" stroke="#626262" stroke-width=".45"/></svg><div class="ci" style="left:398.5px"></div><svg style="left:400.8px;top:5.5px" width="9.5" height="9.5" viewBox="0 0 8 8" ><path d="M1 7l.5-2L5.700 .9c.5-.5 1.100-.4 1.500 0s.5 1 0 1.500L3 6.500z" fill="none" stroke="#555" stroke-width=".6" stroke-linejoin="round"/></svg></div><div class="row" style="top:84.72px"><div class="cb"></div><span style="left:33px;letter-spacing:-.08px">KVmW4V8QNM...</span><span style="left:102px">no-expiry</span><span style="left:171.5px">Enabled</span><div class="ci" style="left:379px"></div><svg style="left:382px;top:5.8px" width="9" height="9" viewBox="0 0 8 8" ><path d="M1 1.300h6M1.600 1.300V7.200h4.800V1.300" fill="none" stroke="#626262" stroke-width=".6"/><path d="M1.300 .6h5.400" stroke="#626262" stroke-width=".45"/></svg><div class="ci" style="left:398.5px"></div><svg style="left:400.8px;top:5.5px" width="9.5" height="9.5" viewBox="0 0 8 8" ><path d="M1 7l.5-2L5.700 .9c.5-.5 1.100-.4 1.500 0s.5 1 0 1.500L3 6.500z" fill="none" stroke="#555" stroke-width=".6" stroke-linejoin="round"/></svg></div><div class="row" style="top:106.05px"><div class="cb"></div><span style="left:33px;letter-spacing:-.08px">KvmKTWSPPtc9...</span><span style="left:102px">no-expiry</span><span style="left:171.5px">Enabled</span><div class="ci" style="left:379px"></div><svg style="left:382px;top:5.8px" width="9" height="9" viewBox="0 0 8 8" ><path d="M1 1.300h6M1.600 1.300V7.200h4.800V1.300" fill="none" stroke="#626262" stroke-width=".6"/><path d="M1.300 .6h5.400" stroke="#626262" stroke-width=".45"/></svg><div class="ci" style="left:398.5px"></div><svg style="left:400.8px;top:5.5px" width="9.5" height="9.5" viewBox="0 0 8 8" ><path d="M1 7l.5-2L5.700 .9c.5-.5 1.100-.4 1.500 0s.5 1 0 1.500L3 6.500z" fill="none" stroke="#555" stroke-width=".6" stroke-linejoin="round"/></svg></div><div class="row" style="top:127.38px"><div class="cb"></div><span style="left:33px;letter-spacing:-.08px">MuGj2nkC2uPp...</span><span style="left:102px">no-expiry</span><span style="left:171.5px">Enabled</span><div class="ci" style="left:379px"></div><svg style="left:382px;top:5.8px" width="9" height="9" viewBox="0 0 8 8" ><path d="M1 1.300h6M1.600 1.300V7.200h4.800V1.300" fill="none" stroke="#626262" stroke-width=".6"/><path d="M1.300 .6h5.400" stroke="#626262" stroke-width=".45"/></svg><div class="ci" style="left:398.5px"></div><svg style="left:400.8px;top:5.5px" width="9.5" height="9.5" viewBox="0 0 8 8" ><path d="M1 7l.5-2L5.700 .9c.5-.5 1.100-.4 1.500 0s.5 1 0 1.500L3 6.500z" fill="none" stroke="#555" stroke-width=".6" stroke-linejoin="round"/></svg></div><div class="row" style="top:148.71px"><div class="cb"></div><span style="left:33px;letter-spacing:-.08px">OVirR34AHSHV...</span><span style="left:102px">no-expiry</span><span style="left:171.5px">Enabled</span><div class="ci" style="left:379px"></div><svg style="left:382px;top:5.8px" width="9" height="9" viewBox="0 0 8 8" ><path d="M1 1.300h6M1.600 1.300V7.200h4.800V1.300" fill="none" stroke="#626262" stroke-width=".6"/><path d="M1.300 .6h5.400" stroke="#626262" stroke-width=".45"/></svg><div class="ci" style="left:398.5px"></div><svg style="left:400.8px;top:5.5px" width="9.5" height="9.5" viewBox="0 0 8 8" ><path d="M1 7l.5-2L5.700 .9c.5-.5 1.100-.4 1.500 0s.5 1 0 1.500L3 6.500z" fill="none" stroke="#555" stroke-width=".6" stroke-linejoin="round"/></svg></div><div class="row" style="top:170.04px"><div class="cb"></div><span style="left:33px;letter-spacing:-.08px">SQ68F9WbVEu...</span><span style="left:102px">no-expiry</span><span style="left:171.5px">Enabled</span><div class="ci" style="left:379px"></div><svg style="left:382px;top:5.8px" width="9" height="9" viewBox="0 0 8 8" ><path d="M1 1.300h6M1.600 1.300V7.200h4.800V1.300" fill="none" stroke="#626262" stroke-width=".6"/><path d="M1.300 .6h5.400" stroke="#626262" stroke-width=".45"/></svg><div class="ci" style="left:398.5px"></div><svg style="left:400.8px;top:5.5px" width="9.5" height="9.5" viewBox="0 0 8 8" ><path d="M1 7l.5-2L5.700 .9c.5-.5 1.100-.4 1.500 0s.5 1 0 1.500L3 6.500z" fill="none" stroke="#555" stroke-width=".6" stroke-linejoin="round"/></svg></div><div class="row" style="top:191.37px"><div class="cb"></div><span style="left:33px;letter-spacing:-.08px">W96OLCosJkW...</span><span style="left:102px">no-expiry</span><span style="left:171.5px">Enabled</span><div class="ci" style="left:379px"></div><svg style="left:382px;top:5.8px" width="9" height="9" viewBox="0 0 8 8" ><path d="M1 1.300h6M1.600 1.300V7.200h4.800V1.300" fill="none" stroke="#626262" stroke-width=".6"/><path d="M1.300 .6h5.400" stroke="#626262" stroke-width=".45"/></svg><div class="ci" style="left:398.5px"></div><svg style="left:400.8px;top:5.5px" width="9.5" height="9.5" viewBox="0 0 8 8" ><path d="M1 7l.5-2L5.700 .9c.5-.5 1.100-.4 1.500 0s.5 1 0 1.500L3 6.500z" fill="none" stroke="#555" stroke-width=".6" stroke-linejoin="round"/></svg></div><div class="row" style="top:212.70px"><div class="cb"></div><span style="left:33px;letter-spacing:-.08px">Wxb3gBwuXbA...</span><span style="left:102px">no-expiry</span><span style="left:171.5px">Enabled</span><div class="ci" style="left:379px"></div><svg style="left:382px;top:5.8px" width="9" height="9" viewBox="0 0 8 8" ><path d="M1 1.300h6M1.600 1.300V7.200h4.800V1.300" fill="none" stroke="#626262" stroke-width=".6"/><path d="M1.300 .6h5.400" stroke="#626262" stroke-width=".45"/></svg><div class="ci" style="left:398.5px"></div><svg style="left:400.8px;top:5.5px" width="9.5" height="9.5" viewBox="0 0 8 8" ><path d="M1 7l.5-2L5.700 .9c.5-.5 1.100-.4 1.500 0s.5 1 0 1.500L3 6.500z" fill="none" stroke="#555" stroke-width=".6" stroke-linejoin="round"/></svg></div><div class="row" style="top:234.03px"><div class="cb"></div><span style="left:33px;letter-spacing:-.08px">hUACjEMmEWM...</span><span style="left:102px">no-expiry</span><span style="left:171.5px">Enabled</span><div class="ci" style="left:379px"></div><svg style="left:382px;top:5.8px" width="9" height="9" viewBox="0 0 8 8" ><path d="M1 1.300h6M1.600 1.300V7.200h4.800V1.300" fill="none" stroke="#626262" stroke-width=".6"/><path d="M1.300 .6h5.400" stroke="#626262" stroke-width=".45"/></svg><div class="ci" style="left:398.5px"></div><svg style="left:400.8px;top:5.5px" width="9.5" height="9.5" viewBox="0 0 8 8" ><path d="M1 7l.5-2L5.700 .9c.5-.5 1.100-.4 1.500 0s.5 1 0 1.500L3 6.500z" fill="none" stroke="#555" stroke-width=".6" stroke-linejoin="round"/></svg></div><div class="row" style="top:255.36px"><div class="cb"></div><span style="left:33px;letter-spacing:-.08px">xTgu3nkDSXSP...</span><span style="left:102px">no-expiry</span><span style="left:171.5px">Enabled</span><div class="ci" style="left:379px"></div><svg style="left:382px;top:5.8px" width="9" height="9" viewBox="0 0 8 8" ><path d="M1 1.300h6M1.600 1.300V7.200h4.800V1.300" fill="none" stroke="#626262" stroke-width=".6"/><path d="M1.300 .6h5.400" stroke="#626262" stroke-width=".45"/></svg><div class="ci" style="left:398.5px"></div><svg style="left:400.8px;top:5.5px" width="9.5" height="9.5" viewBox="0 0 8 8" ><path d="M1 7l.5-2L5.700 .9c.5-.5 1.100-.4 1.500 0s.5 1 0 1.500L3 6.500z" fill="none" stroke="#555" stroke-width=".6" stroke-linejoin="round"/></svg></div><div class="row" style="top:276.69px"><div class="cb"></div><span style="left:33px;letter-spacing:-.08px">xdawPSkHW59...</span><span style="left:102px">no-expiry</span><span style="left:171.5px">Enabled</span><div class="ci" style="left:379px"></div><svg style="left:382px;top:5.8px" width="9" height="9" viewBox="0 0 8 8" ><path d="M1 1.300h6M1.600 1.300V7.200h4.800V1.300" fill="none" stroke="#626262" stroke-width=".6"/><path d="M1.300 .6h5.400" stroke="#626262" stroke-width=".45"/></svg><div class="ci" style="left:398.5px"></div><svg style="left:400.8px;top:5.5px" width="9.5" height="9.5" viewBox="0 0 8 8" ><path d="M1 7l.5-2L5.700 .9c.5-.5 1.100-.4 1.500 0s.5 1 0 1.500L3 6.500z" fill="none" stroke="#555" stroke-width=".6" stroke-linejoin="round"/></svg></div></div>
  <div id="nxt"></div>
 </div></div>
</div>
</body></html>
